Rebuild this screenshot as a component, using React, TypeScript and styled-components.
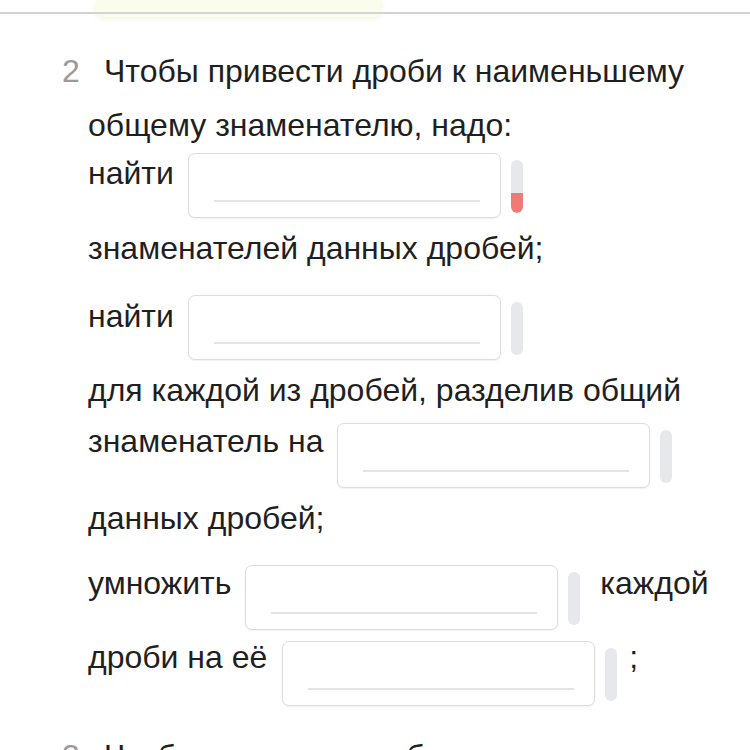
import React from 'react'
import styled, { createGlobalStyle } from 'styled-components'

const GlobalStyle = createGlobalStyle`
  html, body {
    margin: 0;
    padding: 0;
    background: #fff;
  }
  body {
    font-family: "Liberation Sans", Arial, sans-serif;
    color: #1f1f1f;
    overflow: hidden;
  }
`

const Page = styled.div`
  width: 750px;
  height: 750px;
  overflow: hidden;
`

const TopStrip = styled.div`
  position: relative;
  height: 17px;
`

const PrevCard = styled.div`
  margin-left: 95px;
  width: 287px;
  height: 17px;
  background: #fafcec;
  border-radius: 0 0 8px 8px;
  box-shadow: 0 2px 4px rgba(220, 230, 180, 0.35);
`

const Divider = styled.div`
  position: absolute;
  left: 0;
  right: 0;
  top: 12px;
  height: 2px;
  background: #d3d3d3;
`

const Task = styled.div<{ $top: number }>`
  margin-top: ${p => p.$top}px;
  padding-left: 88px;
  padding-right: 30px;
  font-size: 32px;
  line-height: 33px;
`

const Line = styled.div<{ $gap?: number }>`
  display: flex;
  align-items: flex-start;
  margin-top: ${p => p.$gap ?? 0}px;
  white-space: nowrap;
`

const Num = styled.span`
  width: 42px;
  margin-left: -26px;
  color: #9a9a9a;
`

const Word = styled.span<{ $shift?: number }>`
  margin-top: ${p => p.$shift ?? 0}px;
`

const Gap = styled.span<{ $w: number }>`
  width: ${p => p.$w}px;
  flex: none;
`

const AnswerBox = styled.div`
  position: relative;
  width: 313px;
  height: 65px;
  box-sizing: border-box;
  border: 1.5px solid #dcdcd8;
  border-radius: 7px;
  background: #fff;
  box-shadow: 0 1px 2px rgba(0, 0, 0, 0.06);
  flex: none;
`

const Underline = styled.div`
  position: absolute;
  left: 25px;
  right: 20px;
  bottom: 15px;
  height: 2px;
  background: #e4e4e4;
`

const Meter = styled.div`
  width: 12px;
  height: 53px;
  margin: 7px 0 0 10px;
  border-radius: 6px;
  background: #e6e8eb;
  overflow: hidden;
  display: flex;
  flex-direction: column;
  justify-content: flex-end;
  flex: none;
`

const MeterFill = styled.div`
  background: #ef7b76;
  border-radius: 0 0 6px 6px;
`

function Blank({ level = 0 }: { level?: number }) {
  return (
    <>
      <AnswerBox>
        <Underline />
      </AnswerBox>
      <Meter>
        {level > 0 && <MeterFill style={{ height: `${level * 100}%` }} />}
      </Meter>
    </>
  )
}

export default function App() {
  return (
    <Page>
      <GlobalStyle />
      <TopStrip>
        <PrevCard />
        <Divider />
      </TopStrip>

      <Task $top={38}>
        <Line>
          <Num>2</Num>
          <span>Чтобы привести дроби к наименьшему</span>
        </Line>
        <Line $gap={21}>общему знаменателю, надо:</Line>
        <Line $gap={11}>
          <Word $shift={4}>найти</Word>
          <Gap $w={14} />
          <Blank level={0.38} />
        </Line>
        <Line $gap={14}>знаменателей данных дробей;</Line>
        <Line $gap={30}>
          <Word $shift={5}>найти</Word>
          <Gap $w={14} />
          <Blank />
        </Line>
        <Line $gap={14}>для каждой из дробей, разделив общий</Line>
        <Line $gap={16}>
          <Word $shift={2}>знаменатель на</Word>
          <Gap $w={14} />
          <Blank />
        </Line>
        <Line $gap={14}>данных дробей;</Line>
        <Line $gap={30}>
          <Word $shift={2}>умножить</Word>
          <Gap $w={14} />
          <Blank />
          <Gap $w={20} />
          <Word $shift={2}>каждой</Word>
        </Line>
        <Line $gap={11}>
          <Word $shift={0}>дроби на её</Word>
          <Gap $w={15} />
          <Blank />
          <Gap $w={12} />
          <Word $shift={0}>;</Word>
        </Line>
      </Task>

      <Task $top={34}>
        <Line>
          <Num>3</Num>
          <span>Чтобы сравнить дроби с разными</span>
        </Line>
      </Task>
    </Page>
  )
}
